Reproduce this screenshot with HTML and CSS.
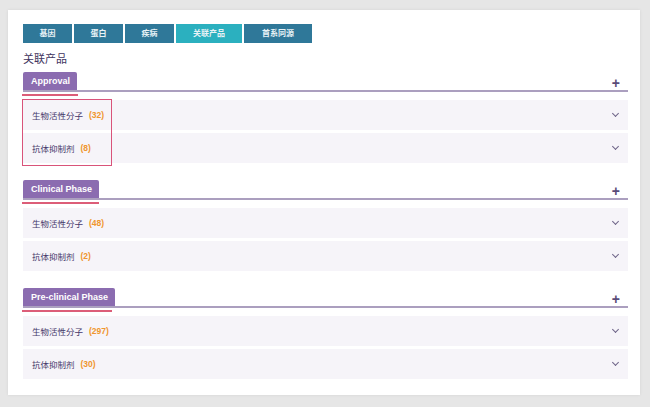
FILE: index.html
```html
<!DOCTYPE html>
<html lang="zh">

<head>
    <meta charset="UTF-8">
    <title>关联产品</title>
    <link rel="stylesheet" href="styles.css">
</head>

<body>
    <div class="card">
        <div class="nav">
            <div class="nav-item">基因</div>
            <div class="nav-item">蛋白</div>
            <div class="nav-item">疾病</div>
            <div class="nav-item active wide">关联产品</div>
            <div class="nav-item wider">首系同源</div>
        </div>
        <h2 class="title">关联产品</h2>

        <div class="section">
            <div class="section-head">
                <span class="phase">Approval</span>
                <span class="plus">+</span>
            </div>
            <div class="mark"></div>
            <div class="rows highlight">
                <div class="row"><span>生物活性分子</span><em>(32)</em><i class="chev"></i></div>
                <div class="row"><span>抗体抑制剂</span><em>(8)</em><i class="chev"></i></div>
            </div>
        </div>

        <div class="section">
            <div class="section-head">
                <span class="phase">Clinical Phase</span>
                <span class="plus">+</span>
            </div>
            <div class="mark"></div>
            <div class="rows">
                <div class="row"><span>生物活性分子</span><em>(48)</em><i class="chev"></i></div>
                <div class="row"><span>抗体抑制剂</span><em>(2)</em><i class="chev"></i></div>
            </div>
        </div>

        <div class="section">
            <div class="section-head">
                <span class="phase">Pre-clinical Phase</span>
                <span class="plus">+</span>
            </div>
            <div class="mark"></div>
            <div class="rows">
                <div class="row"><span>生物活性分子</span><em>(297)</em><i class="chev"></i></div>
                <div class="row"><span>抗体抑制剂</span><em>(30)</em><i class="chev"></i></div>
            </div>
        </div>
    </div>
</body>

</html>
```

FILE: styles.css
```css
* {
    box-sizing: border-box;
}

body {
    margin: 0;
    background-color: #e6e6e6;
    font-family: "Liberation Sans", Arial, "Noto Sans CJK SC", sans-serif;
    padding: 10px 10px 12px 8px;
}

.card {
    background-color: #fff;
    width: 632px;
    height: 385px;
    padding: 14px 12px 0 15px;
    box-shadow: 0 0 3px rgba(0, 0, 0, 0.08);
}

.nav {
    display: flex;
    gap: 2px;
}

.nav-item {
    width: 49px;
    height: 19px;
    line-height: 19px;
    text-align: center;
    background-color: #2f7899;
    color: #e8f2f6;
    font-size: 8px;
    font-weight: bold;
}

.nav-item.wide {
    width: 66px;
}

.nav-item.wider {
    width: 68px;
}

.nav-item.active {
    background-color: #2bb0bf;
}

.title {
    margin: 9px 0 6px;
    font-size: 11px;
    font-weight: normal;
    color: #3f3560;
    line-height: 14px;
}

.section {
    margin-bottom: 17px;
}

.section-head {
    display: flex;
    justify-content: space-between;
    align-items: flex-end;
    border-bottom: 2px solid #ab9fbf;
}

.phase {
    background-color: #8b6cb0;
    color: #fff;
    font-size: 9px;
    font-weight: bold;
    height: 18px;
    line-height: 18px;
    padding: 0 7px 0 8px;
    border-radius: 2px 2px 0 0;
}

.plus {
    font-size: 14px;
    font-weight: bold;
    color: #5a4b78;
    line-height: 14px;
    margin-right: 8px;
}

.mark {
    width: 56px;
    height: 2px;
    background-color: #dc5d78;
    margin: 2px 0 4px -1px;
}

.section:nth-child(4) .mark {
    width: 77px;
}

.section:nth-child(5) .mark {
    width: 90px;
}

.rows {
    display: flex;
    flex-direction: column;
    gap: 3px;
    position: relative;
}

.rows.highlight::after {
    content: "";
    position: absolute;
    left: -1px;
    top: -1px;
    width: 88px;
    height: 65px;
    border: 1.5px solid #d9537a;
}

.row {
    display: flex;
    align-items: center;
    height: 30px;
    background-color: #f6f4f9;
    padding: 0 8px 0 9px;
    font-size: 8.5px;
    color: #45386a;
}

.row em {
    font-style: normal;
    font-weight: bold;
    color: #f0962e;
    margin-left: 6px;
}

.chev {
    margin-left: auto;
    width: 5px;
    height: 5px;
    border-right: 1.5px solid #6e6488;
    border-bottom: 1.5px solid #6e6488;
    transform: rotate(45deg);
    margin-top: -3px;
    margin-right: 2px;
}
```
